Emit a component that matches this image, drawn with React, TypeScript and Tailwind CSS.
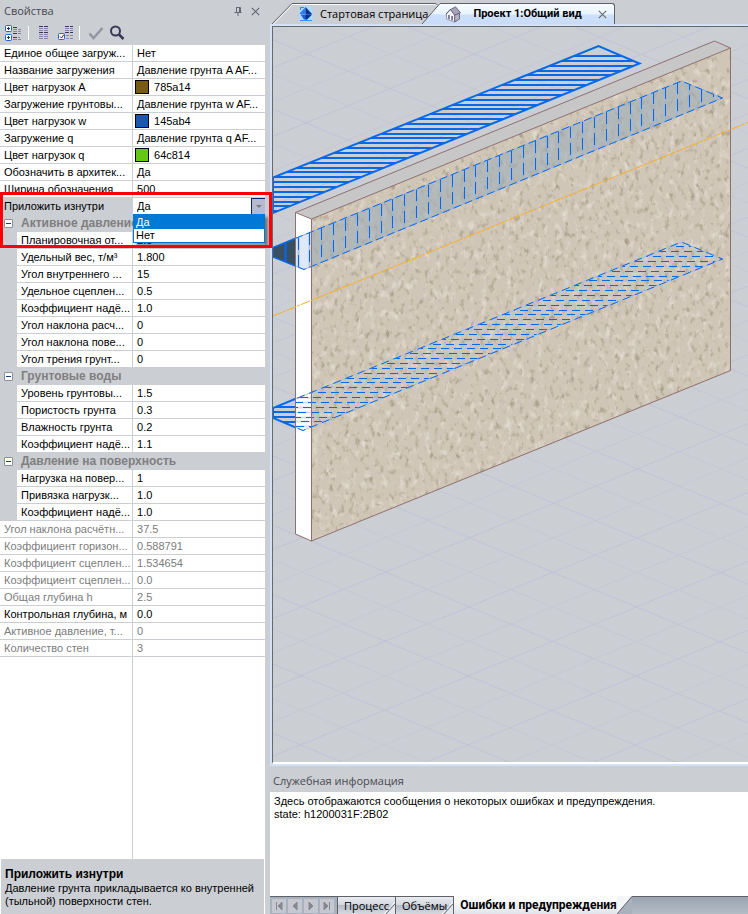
import React from "react";

const ARIAL = "font-['Liberation_Sans',Arial,sans-serif]";
const UI = "font-['Open_Sans','Noto_Sans',sans-serif]";
const UI_BOLD = "font-['Roboto','Noto_Sans',sans-serif] font-bold";

type Row = { label: string; value?: string; color?: string; kind?: "group" | "child" | "muted" | "select" };

const rows: Row[] = [
  { label: "Единое общее загруж...", value: "Нет" },
  { label: "Название загружения", value: "Давление грунта A AF..." },
  { label: "Цвет нагрузок A", value: "785a14", color: "#785a14" },
  { label: "Загружение грунтовы...", value: "Давление грунта w AF..." },
  { label: "Цвет нагрузок w", value: "145ab4", color: "#145ab4" },
  { label: "Загружение q", value: "Давление грунта q AF..." },
  { label: "Цвет нагрузок q", value: "64c814", color: "#64c814" },
  { label: "Обозначить в архитек...", value: "Да" },
  { label: "Ширина обозначения", value: "500" },
  { label: "Приложить изнутри", value: "Да", kind: "select" },
  { label: "Активное давление", kind: "group" },
  { label: "Планировочная от...", value: "2.5", kind: "child" },
  { label: "Удельный вес, т/м³", value: "1.800", kind: "child" },
  { label: "Угол внутреннего ...", value: "15", kind: "child" },
  { label: "Удельное сцеплен...", value: "0.5", kind: "child" },
  { label: "Коэффициент надё...", value: "1.0", kind: "child" },
  { label: "Угол наклона расч...", value: "0", kind: "child" },
  { label: "Угол наклона пове...", value: "0", kind: "child" },
  { label: "Угол трения грунт...", value: "0", kind: "child" },
  { label: "Грунтовые воды", kind: "group" },
  { label: "Уровень грунтовы...", value: "1.5", kind: "child" },
  { label: "Пористость грунта", value: "0.3", kind: "child" },
  { label: "Влажность грунта", value: "0.2", kind: "child" },
  { label: "Коэффициент надё...", value: "1.1", kind: "child" },
  { label: "Давление на поверхность", kind: "group" },
  { label: "Нагрузка на повер...", value: "1", kind: "child" },
  { label: "Привязка нагрузк...", value: "1.0", kind: "child" },
  { label: "Коэффициент надё...", value: "1.0", kind: "child" },
  { label: "Угол наклона расчётн...", value: "37.5", kind: "muted" },
  { label: "Коэффициент горизон...", value: "0.588791", kind: "muted" },
  { label: "Коэффициент сцеплен...", value: "1.534654", kind: "muted" },
  { label: "Коэффициент сцеплен...", value: "0.0", kind: "muted" },
  { label: "Общая глубина h", value: "2.5", kind: "muted" },
  { label: "Контрольная глубина, м", value: "0.0" },
  { label: "Активное давление, т...", value: "0", kind: "muted" },
  { label: "Количество стен", value: "3", kind: "muted" },
];

function GroupRow({ label }: { label: string }) {
  return (
    <tr className="h-[17px]">
      <td className="bg-[#cbced3] p-0">
        <button
          type="button"
          aria-label={`Свернуть: ${label}`}
          className="ml-1 flex h-[9px] w-[9px] items-center justify-center rounded-[1px] border border-[#8c8f96] bg-white"
        >
          <span className="h-px w-[5px] bg-[#1c3f94]" />
        </button>
      </td>
      <th colSpan={2} className="bg-[#cbced3] p-0 pl-1 text-left text-[12px] font-bold leading-[17px] text-[#7f7f7f]">
        {label}
      </th>
    </tr>
  );
}

function SelectCell() {
  return (
    <td className="relative border-b border-[#cbced3] bg-white p-0">
      <div className="flex h-4">
        <select
          id="apply-inside"
          defaultValue="Да"
          className="h-4 min-w-0 flex-1 appearance-none bg-white pl-1 text-[11px] leading-4 text-black outline-none"
        >
          <option>Да</option>
          <option>Нет</option>
        </select>
        <button
          type="button"
          aria-label="Открыть список"
          className="flex w-[14px] items-center justify-center border border-r-0 border-b-0 border-[#0a246a] bg-[#b5bad1]"
        >
          <span className="border-x-[3px] border-t-[3px] border-x-transparent border-t-[#7c7c84]" />
        </button>
      </div>
      <ul
        role="listbox"
        aria-label="Приложить изнутри"
        className="absolute top-full right-0 left-0 z-10 border border-[#0078d7] bg-white text-[11px] leading-[14px] shadow-[3px_3px_3px_rgba(0,0,0,0.45)]"
      >
        <li role="option" aria-selected="true" className="bg-[#0078d7] pl-[2px] text-white">
          Да
        </li>
        <li role="option" aria-selected="false" className="pl-[2px] leading-[13px] text-black">
          Нет
        </li>
      </ul>
    </td>
  );
}

function PropertyRow({ row }: { row: Row }) {
  if (row.kind === "group") return <GroupRow label={row.label} />;
  const child = row.kind === "child";
  const tone = row.kind === "muted" ? "text-[#7c7c7c]" : "text-black";
  const labelBg = row.kind === "select" ? "bg-[#cbced3]" : "bg-white";
  return (
    <tr className={`h-[17px] leading-4 ${tone}`}>
      {child && <td className="bg-[#cbced3] p-0" />}
      <th
        colSpan={child ? 1 : 2}
        className={`overflow-hidden border-r border-b border-[#cbced3] p-0 pl-1 text-left font-normal whitespace-nowrap ${labelBg}`}
      >
        {row.kind === "select" ? <label htmlFor="apply-inside">{row.label}</label> : row.label}
      </th>
      {row.kind === "select" ? (
        <SelectCell />
      ) : (
        <td className={`border-b border-[#cbced3] bg-white p-0 whitespace-nowrap ${row.color ? "pl-[2px]" : "pl-1"}`}>
          {row.color ? (
            <span className="flex items-center gap-[5px]">
              <span className="h-[14px] w-[14px] border border-black" style={{ backgroundColor: row.color }} />
              {row.value}
            </span>
          ) : (
            row.value
          )}
        </td>
      )}
    </tr>
  );
}

function ListLines({ x, y }: { x: number; y: number }) {
  const n = [0, 1, 2, 3, 4, 5];
  return (
    <g strokeWidth="1">
      {n.map((i) => (
        <g key={i} stroke={i % 3 === 0 ? "#3a3850" : "#8c83a3"}>
          <path d={`M${x} ${y + i * 2 + 0.5}h4M${x + 5} ${y + i * 2 + 0.5}h4`} />
        </g>
      ))}
    </g>
  );
}

function Toolbar() {
  const btn = "flex h-5 items-center justify-center";
  return (
    <div role="toolbar" aria-label="Свойства" className="flex h-[23px] items-center pb-px pl-[4px]">
      <button type="button" aria-label="Развернуть всё" className={`${btn} w-[18px]`}>
        <svg width="18" height="18" viewBox="0 0 18 18" fill="none">
          <rect x="1.500" y="1.500" width="6" height="6" rx="1" fill="#fff" stroke="#1769e0" />
          <rect x="1.500" y="10.500" width="6" height="6" rx="1" fill="#fff" stroke="#1769e0" />
          <path d="M3 4.500h3M4.500 3v3M3 13.500h3M4.500 12v3" stroke="#15326c" />
          <path d="M9 3.500h4M9 9.500h4M9 13.500h4" stroke="#3a3850" />
          <path d="M9 5.500h4M14 5.500h3M9 7.500h4M14 7.500h3M14 9.500h3M14 13.500h2M9 15.500h4M14 15.500h3" stroke="#8c83a3" />
        </svg>
      </button>
      <span className="mx-[6px] h-[14px] w-px bg-white" />
      <button type="button" aria-label="Список" className={`${btn} w-[18px]`}>
        <svg width="12" height="16" viewBox="0 0 12 16">
          <ListLines x={1} y={1} />
          <path d="M1 13.500h4M6 13.500h4" stroke="#8c83a3" />
        </svg>
      </button>
      <button type="button" aria-label="Выбранные" className={`${btn} ml-[3px] w-[18px]`}>
        <svg width="16" height="16" viewBox="0 0 16 16" fill="none">
          <path d="M8 1.500h4M13 1.500h3M8 7.500h4M13 7.500h3" stroke="#3a3850" />
          <path d="M8 3.500h4M13 3.500h3M8 5.500h4M13 5.500h3M9 10.500h3M13 10.500h3M9 13.500h3M13 13.500h3" stroke="#8c83a3" />
          <rect x="1.500" y="8.500" width="6" height="6" rx="1" fill="#fff" stroke="#1769e0" />
          <path d="M3 11.500l1.500 1.500 2.500-3.500" stroke="#26375c" />
        </svg>
      </button>
      <span className="mx-[5px] h-[14px] w-px bg-white" />
      <button type="button" aria-label="Применить" className={`${btn} ml-[2px] w-[18px]`}>
        <svg width="16" height="14" viewBox="0 0 16 14" fill="none">
          <path d="M1.500 7.500l4 4.500L14.500 2" stroke="#9596a4" strokeWidth="2.600" />
        </svg>
      </button>
      <button type="button" aria-label="Найти" className={`${btn} ml-[3px] w-[18px]`}>
        <svg width="16" height="16" viewBox="0 0 16 16" fill="none" stroke="#3d3858">
          <circle cx="6.500" cy="6" r="4.500" strokeWidth="2" />
          <path d="M10 9.500l4.500 4.500" strokeWidth="2.600" />
        </svg>
      </button>
    </div>
  );
}

function PropertiesPanel() {
  return (
    <aside className="relative flex w-[270px] shrink-0 flex-col bg-[#cbced3]">
      <header className="flex h-[22px] items-center justify-between pr-[10px] pl-1">
        <h2 className={`${UI} text-[11px] leading-4 text-[#4a4a4f]`}>Свойства</h2>
        <div className="flex items-center gap-[9px]">
          <button type="button" aria-label="Закрепить">
            <svg width="8" height="9" viewBox="0 0 8 9" fill="none" stroke="#66676e">
              <path d="M2 .5h4.500v5M2.500 .5v5M5.500 .5v5M.5 5.500h7M4 6v3" />
            </svg>
          </button>
          <button type="button" aria-label="Закрыть">
            <svg width="9" height="9" viewBox="0 0 9 9" stroke="#66676e" strokeWidth="1.200">
              <path d="M.8.8l7.400 7.400M8.200.8L.8 8.200" />
            </svg>
          </button>
        </div>
      </header>
      <Toolbar />
      <div className="mr-[5px] flex min-h-0 flex-1 flex-col bg-white">
        <table className={`${ARIAL} w-full table-fixed border-separate border-spacing-0 text-[11px]`}>
          <colgroup>
            <col className="w-[17px]" />
            <col className="w-[116px]" />
            <col />
          </colgroup>
          <tbody>
            {rows.map((row, i) => (
              <PropertyRow key={i} row={row} />
            ))}
          </tbody>
        </table>
        <div className="w-[133px] flex-1 border-r border-[#cbced3]" />
        <div className={`${ARIAL} mx-px h-[55px] bg-[#cbced3] px-1 pt-2 text-[11px] leading-[13px] text-black`}>
          <h3 className="text-[12px] font-bold leading-[15px]">Приложить изнутри</h3>
          <p className="whitespace-nowrap">
            Давление грунта прикладывается ко внутренней
            <br />
            (тыльной) поверхности стен.
          </p>
        </div>
      </div>
      <div className="pointer-events-none absolute top-[192px] left-0 z-20 h-[56px] w-[272px] border-[3px] border-[#fb0007]" />
    </aside>
  );
}

function GridLines() {
  const items: React.ReactElement[] = [];
  for (let n = -24; n <= 24; n++) {
    const stroke = n % 2 === 0 ? "#c1c3d8" : "#c7c8d3";
    const dx = n * 42;
    const dy = n * 17.2;
    const ax = 469.7 + dx;
    const ay = 537.7 - dy;
    const by = 537.7 + dy;
    items.push(
      <path key={`a${n}`} stroke={stroke} d={`M${ax - 1000} ${ay - 416}L${ax + 1000} ${ay + 416}`} />,
      <path key={`b${n}`} stroke={stroke} d={`M${ax - 1000} ${by + 410}L${ax + 1000} ${by - 410}`} />,
    );
  }
  return <g>{items}</g>;
}

function hLines(from: number, step: number, count: number, shift = 0) {
  return Array.from({ length: count }, (_, i) => `M${273 - ((i * shift) % 13)} ${Math.round(from + i * step) + (shift ? 0.5 : 0)}H748`).join("");
}

function vLines(from: number, step: number, count: number) {
  return Array.from({ length: count }, (_, i) => {
    const top = Math.round(238 - i * 4.86);
    return `M${Math.round(from + i * step) + 0.5} ${top}V280`;
  }).join("");
}

function Scene() {
  const blue = "#0668ea";
  const upper = "273,177.500 598.500,46 639.500,63.500 273,213";
  const middle = "273,247.500 681.500,81 722.500,98 304,269.500 273,257";
  const lower = "273,408 681.500,242 722.500,259 303,430.500 273,418";
  return (
    <svg
      role="img"
      aria-label="Общий вид стены с нагрузками"
      className="block h-full w-full"
      viewBox="273 27 475 735"
      preserveAspectRatio="xMinYMin slice"
      fill="none"
    >
      <defs>
        <filter id="darkSpecks" x="0" y="0" width="1" height="1" colorInterpolationFilters="sRGB">
          <feTurbulence type="fractalNoise" baseFrequency="0.2 0.13" numOctaves="3" seed="7" />
          <feColorMatrix values="0 0 0 0 0.66  0 0 0 0 0.61  0 0 0 0 0.52  3 0 0 0 -1.68" />
        </filter>
        <filter id="lightSpecks" x="0" y="0" width="1" height="1" colorInterpolationFilters="sRGB">
          <feTurbulence type="fractalNoise" baseFrequency="0.16 0.1" numOctaves="3" seed="21" />
          <feColorMatrix values="0 0 0 0 0.89  0 0 0 0 0.86  0 0 0 0 0.82  0 3 0 0 -1.62" />
        </filter>
        <clipPath id="front"><path d="M311 219L731 48V371L311 541Z" /></clipPath>
        <clipPath id="leftFace"><path d="M296 212L311 219V541L296 534Z" /></clipPath>
        <clipPath id="outside"><path d="M273 27H296V762H273Z" /></clipPath>
        <clipPath id="inside"><path d="M296 27H748V762H296Z" /></clipPath>
        <clipPath id="upperBand"><polygon points={upper} /></clipPath>
        <clipPath id="middleBand"><polygon points={middle} /></clipPath>
        <clipPath id="lowerBand"><polygon points={lower} /></clipPath>
      </defs>

      <GridLines />

      <path d={hLines(56, 4.85, 33)} stroke={blue} strokeWidth="2" clipPath="url(#upperBand)" />
      <polygon points={upper} stroke={blue} strokeWidth="2" />

      <path d="M296 212L714 41L731 48L311 219Z" fill="#c7c7c7" />
      <path d="M296 212L311 219V541L296 534Z" fill="#fff" />
      <g clipPath="url(#front)">
        <rect x="311" y="48" width="420" height="493" fill="#cfc6b7" />
        <rect x="311" y="48" width="420" height="493" filter="url(#lightSpecks)" />
        <rect x="311" y="48" width="420" height="493" filter="url(#darkSpecks)" />
      </g>

      <g clipPath="url(#inside)">
        <polygon points={middle} fill="#dfe8f9" clipPath="url(#leftFace)" />
        <polygon points={middle} fill="#9dadb8" fillOpacity="0.58" clipPath="url(#front)" />
        <g clipPath="url(#middleBand)">
          <path d={vLines(297.5, 11.86, 36)} stroke="#9cb4d2" strokeWidth="2" strokeOpacity="0.7" />
          <path d={vLines(297.5, 11.86, 36)} stroke={blue} strokeDasharray="12 5" />
        </g>
        <polygon points={middle} stroke="#9cb4d2" />
        <polygon points={middle} stroke={blue} strokeDasharray="8 4" />

        <g clipPath="url(#lowerBand)">
          <path d={hLines(246.4, 4.86, 38, 5)} stroke="#a9bfdc" strokeWidth="2" strokeOpacity="0.5" />
          <path d={hLines(246.4, 4.86, 38, 5)} stroke={blue} strokeDasharray="8 5" />
        </g>
        <polygon points={lower} stroke="#a9bfdc" />
        <polygon points={lower} stroke={blue} strokeDasharray="8 5" />
      </g>

      <g clipPath="url(#outside)">
        <polygon points={middle} fill="#394f62" stroke={blue} strokeWidth="1.500" />
        <path d="M285.500 243V262" stroke={blue} strokeWidth="2" />
        <path d={hLines(407, 5, 5)} stroke={blue} strokeWidth="2" clipPath="url(#lowerBand)" />
        <polygon points={lower} stroke={blue} strokeWidth="2" />
      </g>

      <g stroke="#8f7070">
        <path d="M295.500 212.500L714.500 41L730.500 48V370.500L311.500 541L295.500 534Z" />
        <path d="M295.500 212.500L311.500 219V541M311.500 219L730.500 48" />
      </g>
      <path d="M273 316L748 122.500" stroke="#f9ad20" strokeDasharray="10 1 3 1" />
    </svg>
  );
}

function StartIcon() {
  return (
    <svg width="14" height="16" viewBox="0 0 14 16">
      <path d="M4 .5h9.500v15H.5V4z" fill="#a9dcff" />
      <path d="M2 1.500h3M1.500 1v3" stroke="#2f8df0" fill="none" />
      <path d="M6.500 1v7H1.500L.5 7.500z" fill="#2f7df2" />
      <path d="M6.500 1L13 8H6.500z" fill="#10308c" />
      <path d="M1.500 8.500h11.500L8 13.500H5z" fill="#1d5fd6" />
      <path d="M6.500 8.500h6.500L8 13.500H6.500z" fill="#10308c" />
      <path d="M1 14.500h12" stroke="#3d8ff0" />
    </svg>
  );
}

function HouseIcon() {
  return (
    <svg width="17" height="17" viewBox="0 0 17 17" strokeLinejoin="round">
      <path d="M1.500 8L5.500 3.500 9.500 8.500v7.500l-8-3z" fill="#f3f2f9" stroke="#8d89a0" strokeWidth=".8" />
      <path d="M5.500 3.500L10.500 .8l5 6-5.800 2.500z" fill="#a6a3b8" stroke="#5b576e" strokeWidth=".8" />
      <path d="M9.700 9.300l4.800-2V13l-4.800 3z" fill="#b5b2c6" stroke="#5b576e" strokeWidth=".8" />
      <path d="M.8 8.200L5.500 3.200" stroke="#5b576e" />
      <path d="M3 9h1.800v4.500L3 12.800zM6.200 10h1.800v4.600l-1.800-.7z" fill="#7c7890" />
    </svg>
  );
}

function DocumentTabs() {
  return (
    <div role="tablist" className={`${UI} flex h-6 items-end pl-[2px] text-[11px] leading-4 text-black`}>
      <button type="button" role="tab" aria-selected="false" className="flex h-[21px]">
        <svg width="20" height="21" viewBox="0 0 20 21" fill="none">
          <path d="M0 21L19 1.500L20 .5" stroke="#5f6166" />
          <path d="M1.500 21L20 2" stroke="#fff" />
        </svg>
        <span className="flex h-full items-center gap-[7px] rounded-tr border-t border-[#5f6166] pr-[10px] pl-[7px] whitespace-nowrap shadow-[inset_0_1px_0_#fff]">
          <StartIcon />
          Стартовая страница
        </span>
      </button>
      <div className="-ml-4 flex h-[21px]">
        <svg width="18" height="21" viewBox="0 0 18 21" fill="none">
          <defs>
            <linearGradient id="tabFill" x1="0" y1="0" x2="0" y2="1">
              <stop offset="0" stopColor="#f7fdff" />
              <stop offset="0.500" stopColor="#e9f4ff" />
              <stop offset="0.550" stopColor="#cde0fa" />
              <stop offset="1" stopColor="#c8dcf9" />
            </linearGradient>
          </defs>
          <path d="M0 21L18 .5V21Z" fill="url(#tabFill)" />
          <path d="M0 21L18 .5" stroke="#5f6166" />
        </svg>
        <div className="flex h-full items-center rounded-tr-[3px] border-t border-r border-[#5f6166] bg-[linear-gradient(#f7fdff_0%,#e9f4ff_50%,#cde0fa_55%,#c8dcf9_100%)] pr-[7px] pl-[5px]">
          <button type="button" role="tab" aria-selected="true" className={`${UI_BOLD} flex items-center gap-[11px] whitespace-nowrap`}>
            <HouseIcon />
            Проект 1:Общий вид
          </button>
          <button type="button" aria-label="Закрыть вкладку" className="ml-4">
            <svg width="9" height="9" viewBox="0 0 9 9" stroke="#6b6c72" strokeWidth="1.200">
              <path d="M.8.8l7.400 7.400M8.200.8L.8 8.200" />
            </svg>
          </button>
        </div>
      </div>
    </div>
  );
}

const navShapes = ["M4.500 3v8M10 3v8L6 7z", "M9 3v8L5 7z", "M5 3v8l4-4z", "M9.500 3v8M4 3v8l4-4z"];
const navNames = ["В начало", "Назад", "Вперёд", "В конец"];

function LogTab({ children }: { children: string }) {
  return (
    <button
      type="button"
      role="tab"
      aria-selected="false"
      className="flex h-full border-t border-l border-[#5f6166] bg-[linear-gradient(#e9ecf0_0%,#d5d9df_45%,#b4bcc7_50%,#d6dae0_100%)]"
    >
      <span className="relative z-10 -mr-3 pl-[6px] leading-[18px]">{children}</span>
      <svg width="18" height="18" viewBox="0 0 18 18" fill="none">
        <path d="M8 18L18 7V18Z" fill="#e3e6ea" />
        <path d="M8 18L18 7" stroke="#6d7178" />
        <path d="M6 18L18 5" stroke="#fff" />
      </svg>
    </button>
  );
}

function LogPanel() {
  return (
    <section className="flex h-[148px] shrink-0 flex-col">
      <h2 className={`${UI} h-[26px] pl-[3px] text-[11px] leading-[30px] text-[#4a4a4f]`}>Служебная информация</h2>
      <div role="log" className={`${ARIAL} flex-1 bg-white pt-[3px] pl-1 text-[11px] leading-[13px] text-black`}>
        <p>Здесь отображаются сообщения о некоторых ошибках и предупреждения.</p>
        <p>state: h1200031F:2B02</p>
      </div>
      <div className={`${UI} flex h-[18px] overflow-hidden bg-[#a9b1bc] text-[11px] text-black`}>
        <div className="flex gap-[2px] border-t border-[#5f6166] pt-[2px] pr-[3px] pl-[2px]">
          {navShapes.map((d, i) => (
            <button key={d} type="button" aria-label={navNames[i]} className="h-[14px] w-[14px] bg-[#c5c9cf]">
              <svg width="14" height="14" viewBox="0 0 14 14" fill="#85888e" stroke="#85888e" strokeWidth="1">
                <path d={d} />
              </svg>
            </button>
          ))}
        </div>
        <div role="tablist" className="flex flex-1">
          <LogTab>Процесс</LogTab>
          <LogTab>Объёмы</LogTab>
          <button
            type="button"
            role="tab"
            aria-selected="true"
            className={`${UI_BOLD} h-full border-l border-[#5f6166] bg-[linear-gradient(#ffffff_0%,#f3f5f7_50%,#dfe3e9_100%)] pl-[6px] text-[12px] leading-[19px] whitespace-nowrap`}
          >
            Ошибки и предупреждения
          </button>
          <svg width="15" height="18" viewBox="0 0 15 18" fill="none">
            <path d="M0 18V0H15L0 18Z" fill="#f3f5f7" />
            <path d="M0 18L15 .5" stroke="#5f6166" />
          </svg>
          <div className="flex-1 border-t border-[#5f6166] bg-[linear-gradient(#9aa4b1_0%,#b3bbc5_100%)]" />
        </div>
      </div>
    </section>
  );
}

export default function App() {
  return (
    <div className="flex h-screen overflow-hidden bg-[#cbced3]">
      <PropertiesPanel />
      <main className="flex min-w-0 flex-1 flex-col">
        <DocumentTabs />
        <div className="flex min-h-0 flex-1 flex-col border-t-2 border-b-2 border-l-2 border-[#d3e2f7]">
          <div className="min-h-0 flex-1 border-t border-b-2 border-l border-t-[#66686c] border-b-white border-l-[#66686c] bg-[#cbced3]">
            <Scene />
          </div>
        </div>
        <LogPanel />
      </main>
    </div>
  );
}
